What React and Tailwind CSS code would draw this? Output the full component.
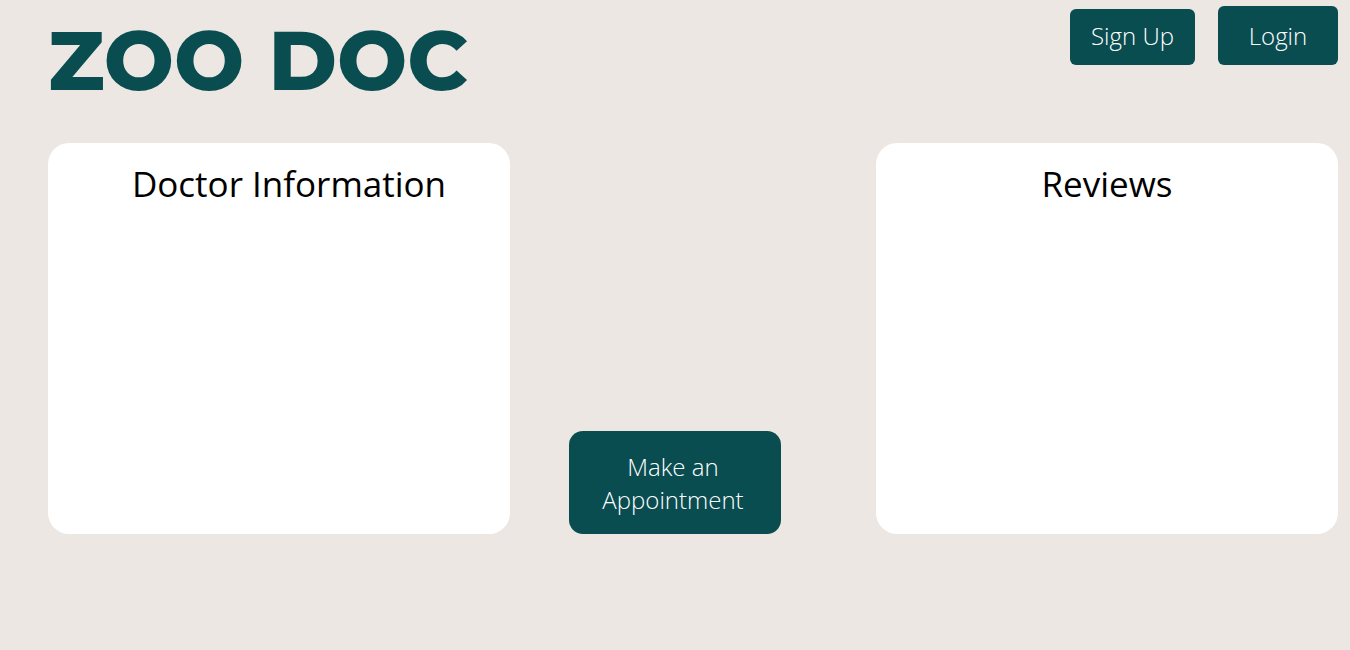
function Card({ title, pad }) {
  return (
    <section className="h-[391px] w-[462px] shrink-0 rounded-[21px] bg-white">
      <h2 className={`pt-4 text-center text-[35px] leading-[49px] text-black ${pad}`}>{title}</h2>
    </section>
  );
}

export default function App() {
  return (
    <div className="min-h-screen bg-[#ece7e3] pr-3 pl-12 font-['Open_Sans',sans-serif]">
      <header className="flex h-[143px] items-start justify-between">
        <h1 className="pt-2 font-['Montserrat','Inter',sans-serif] text-[83px] leading-[106px] font-extrabold whitespace-nowrap text-[#094d51]">
          ZOO DOC
        </h1>
        <nav className="flex items-end gap-[23px] pt-[6px] text-[24px] leading-[33px] font-light text-white">
          <button type="button" className="h-14 w-[125px] rounded-[6px] bg-[#094d51] pb-1">Sign Up</button>
          <button type="button" className="h-[59px] w-[120px] rounded-[6px] bg-[#094d51]">Login</button>
        </nav>
      </header>
      <main className="flex items-end justify-between">
        <Card title="Doctor Information" pad="pl-5" />
        <button
          type="button"
          className="mr-9 h-[103px] w-[212px] rounded-[14px] bg-[#094d51] pr-7 pl-6 text-[24px] leading-[33px] font-light text-white"
        >
          Make an Appointment
        </button>
        <Card title="Reviews" pad="pl-0" />
      </main>
    </div>
  );
}
